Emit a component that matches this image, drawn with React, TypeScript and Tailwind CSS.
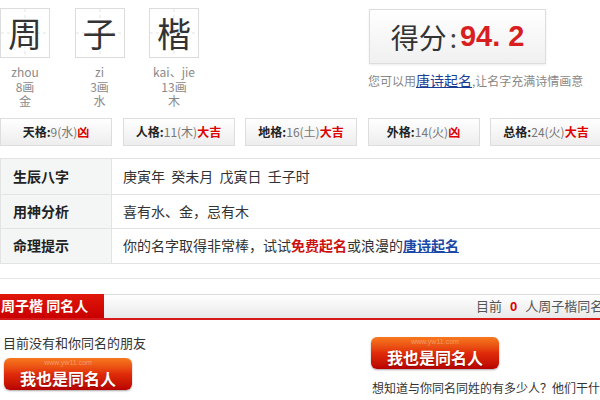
import React from "react";

const cn = { fontFamily: '"Noto Sans CJK SC", "Noto Sans", sans-serif' };

type Char = { ch: string; py: string; strokes: string; el: string };

const chars: Char[] = [
  { ch: "周", py: "zhou", strokes: "8画", el: "金" },
  { ch: "子", py: "zi", strokes: "3画", el: "水" },
  { ch: "楷", py: "kai、jie", strokes: "13画", el: "木" },
];

const grids = [
  { name: "天格", num: "9(水)", luck: "凶" },
  { name: "人格", num: "11(木)", luck: "大吉" },
  { name: "地格", num: "16(土)", luck: "大吉" },
  { name: "外格", num: "14(火)", luck: "凶" },
  { name: "总格", num: "24(火)", luck: "大吉" },
];

function CharBox({ ch, py, strokes, el }: Char) {
  return (
    <div className="flex w-[50px] flex-col items-center">
      <div className="relative flex h-[50px] w-[50px] items-center justify-center border border-[#dcdcdc] bg-white">
        <svg className="absolute inset-0" width="48" height="48">
          <line x1="0" y1="24" x2="48" y2="24" stroke="#e2e2e2" strokeDasharray="3 3" />
          <line x1="24" y1="0" x2="24" y2="48" stroke="#e2e2e2" strokeDasharray="3 3" />
        </svg>
        <span className="relative text-[34px] leading-none text-[#333]">{ch}</span>
      </div>
      <div className="mt-[7px] flex flex-col items-center text-[12px] leading-[14.5px] text-[#8a8a8a]">
        <span className="whitespace-nowrap">{py}</span>
        <span>{strokes}</span>
        <span>{el}</span>
      </div>
    </div>
  );
}

function RedButton() {
  return (
    <div className="flex h-[32px] w-[128px] flex-col items-center overflow-hidden rounded-[6px] bg-gradient-to-b from-[#f7781e] via-[#e02a0a] to-[#b80000] shadow-[0_1px_2px_rgba(0,0,0,0.35)]">
      <span className="mt-[1px] h-[8px] text-[7px] leading-[8px] text-white/35" style={{ fontFamily: '"Liberation Sans", sans-serif' }}>
        www.yw11.com
      </span>
      <span className="mt-[1px] text-[16px] font-bold leading-[20px] text-white [text-shadow:0_1px_1px_rgba(120,0,0,0.6)]">
        我也是同名人
      </span>
    </div>
  );
}

export default function App() {
  return (
    <div className="h-[400px] w-[600px] overflow-hidden bg-white text-[#333]" style={cn}>
      <div className="flex h-[118px] pt-[8px]">
        <div className="flex w-[199px] gap-[24.5px]">
          {chars.map((c) => (
            <CharBox key={c.ch} {...c} />
          ))}
        </div>
        <div className="ml-[170px] flex flex-col">
          <div className="mt-[1px] flex h-[55px] w-[177px] items-center justify-center border border-[#dddddd] bg-gradient-to-b from-white to-[#f0f0f0] shadow-[0_1px_2px_rgba(0,0,0,0.08)]">
            <span className="text-[28px] leading-none text-[#333]">得分</span>
            <span className="mx-[3px] text-[26px] leading-none text-[#444]">:</span>
            <span className="text-[29px] font-bold leading-none text-[#d81e1e]" style={{ fontFamily: '"Liberation Sans", sans-serif' }}>
              94. 2
            </span>
          </div>
          <div className="-ml-[1px] mt-[8px] whitespace-nowrap text-[12px] leading-[16px] text-[#888]">
            您可以用<span className="text-[14px] text-[#1c3d96] underline">唐诗起名</span>,让名字充满诗情画意
          </div>
        </div>
      </div>

      <div className="flex gap-[10.5px]">
        {grids.map((g) => (
          <div
            key={g.name}
            className="flex h-[28px] w-[112px] shrink-0 items-center justify-center border border-[#dddddd] bg-gradient-to-b from-white to-[#ededed] text-[12px]"
          >
            <span className="font-bold text-[#222]">{g.name}:</span>
            <span className="text-[#777]">{g.num}</span>
            <span className="font-bold text-[#d00]">{g.luck}</span>
          </div>
        ))}
      </div>

      <div className="mt-[12px] w-[620px] border border-[#e3e3e3] text-[14px]">
        {[
          { label: "生辰八字", body: <span>庚寅年&nbsp;&nbsp;癸未月&nbsp;&nbsp;戊寅日&nbsp;&nbsp;壬子时</span> },
          { label: "用神分析", body: <span>喜有水、金，忌有木</span> },
          {
            label: "命理提示",
            body: (
              <span>
                你的名字取得非常棒，试试<span className="font-bold text-[#cc1111]">免费起名</span>或浪漫的
                <span className="font-bold text-[#1a49a8] underline">唐诗起名</span>
              </span>
            ),
          },
        ].map((r, i) => (
          <div key={r.label} className={`flex h-[34.5px] ${i > 0 ? "border-t border-[#e3e3e3]" : ""}`}>
            <div className="flex w-[111px] items-center border-r border-[#e3e3e3] bg-[#f4f6f6] pl-[12px] font-bold text-[#222]">
              {r.label}
            </div>
            <div className="flex items-center pl-[11px] text-[#333]">{r.body}</div>
          </div>
        ))}
      </div>

      <div className="mt-[14px] h-[1px] w-full bg-[#e6e6e6]" />

      <div className="mt-[15px] flex h-[26px] w-[640px] border-b-2 border-[#d41a1a]">
        <div className="flex w-[104px] items-center bg-gradient-to-b from-[#e0160b] to-[#c90000] pl-[1px] text-[14px] font-bold text-white">
          周子楷&nbsp;同名人
        </div>
        <div className="flex flex-1 items-center border-t border-[#dddddd] bg-gradient-to-b from-white to-[#e9e9e9] pl-[372px] text-[13px] text-[#555]">
          <span className="whitespace-nowrap">
            目前<span className="mx-[8px] font-bold text-[#d00]" style={{ fontFamily: '"Liberation Sans", sans-serif' }}>0</span>
            人周子楷同名人
          </span>
        </div>
      </div>

      <div className="flex">
        <div className="flex w-[371px] flex-col pl-[3px]">
          <div className="mt-[14px] text-[13px] leading-[18px] text-[#333]">目前没有和你同名的朋友</div>
          <div className="mt-[6px] pl-[1px]">
            <RedButton />
          </div>
        </div>
        <div className="flex w-[229px] flex-col">
          <div className="mt-[17px]">
            <RedButton />
          </div>
          <div className="mt-[10px] pl-[1px] text-[12px] leading-[18px] text-[#333]">
            想知道与你同名同姓的有多少人？他们干什么的？是不是跟你有相同的命运
          </div>
        </div>
      </div>
    </div>
  );
}
